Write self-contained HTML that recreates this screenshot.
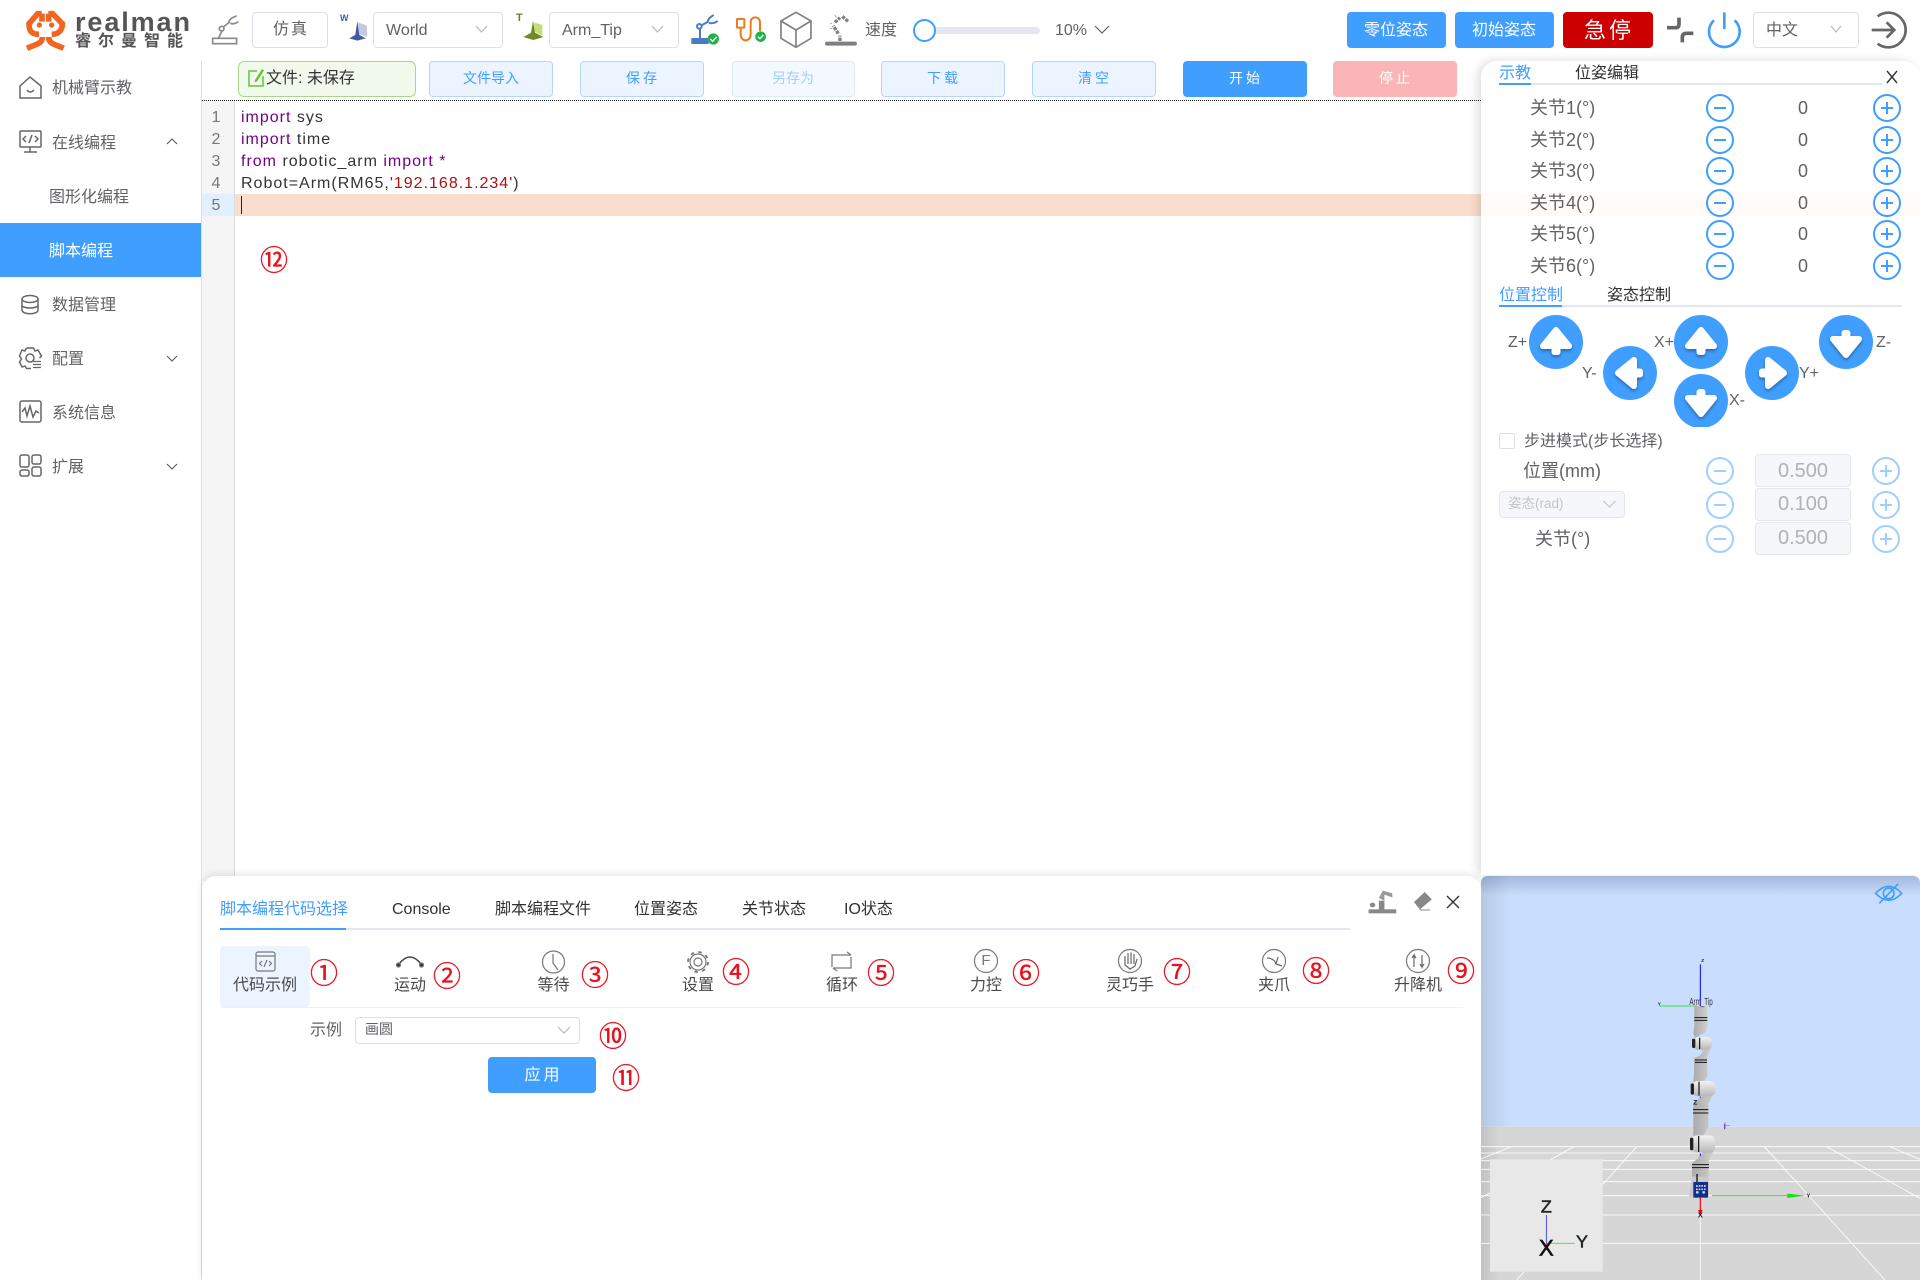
<!DOCTYPE html>
<html lang="zh"><head><meta charset="utf-8"><title>realman</title>
<style>
html,body{margin:0;padding:0;background:#fff}
body{position:relative;width:1920px;height:1280px;overflow:hidden;font-family:"Liberation Sans","Noto Sans CJK SC",sans-serif;color:#606266;font-size:16px}
.b{position:absolute;box-sizing:border-box}
.t{position:absolute;line-height:0;white-space:nowrap}
.c{transform:translateX(-50%)}
.sel{border:1px solid #dcdfe6;border-radius:4px;background:#fff}
.tb{background:#ecf5ff;border:1px solid #b3d8ff;border-radius:4px;top:61px;height:36px}
.tbt{top:78px;font-size:14px;color:#409eff}
.p{background:#409eff;border-radius:4px}
.n{position:absolute;line-height:0;white-space:nowrap;transform:translateX(-50%);color:#e8101c;font-size:28px;-webkit-text-stroke:.35px #e8101c;font-family:"Liberation Sans","Noto Sans CJK JP",sans-serif}
.s{font-size:16px;color:#606266}
.j{font-size:18px;color:#606266;left:1530px}
.v{font-size:18px;color:#606266;left:1803px}
.a{font-size:16px;color:#606266}
.code{font-size:16px;letter-spacing:1px;color:#333;left:241px}
.kw{color:#708}
.ln{font-size:16px;color:#777;left:216px;transform:translateX(-50%)}
.tab{font-size:16px;color:#303133;top:909.500px}
.it{font-size:16px;color:#4a4a4a;top:986px;transform:translateX(-50%)}
.inp{background:#f5f7fa;border:1px solid #e4e7ed;border-radius:4px;left:1755px;width:96px}
.iv{font-size:20px;color:#b0b2b8;left:1803px;transform:translateX(-50%)}
svg{position:absolute;left:0;top:0}
</style></head><body>

<!-- backgrounds -->
<div class="b" style="left:201px;top:61px;width:1px;height:1219px;background:#dcdfe6"></div>
<div class="b" style="left:202px;top:100px;width:1279px;height:1px;border-top:1px dotted #222"></div>
<div class="b" style="left:202px;top:101px;width:33px;height:780px;background:#f5f5f5;border-right:1px solid #dedede"></div>
<div class="b" style="left:202px;top:194px;width:32px;height:22px;background:#e2f0fd"></div>
<div class="b" style="left:235px;top:194px;width:1246px;height:22px;background:#fadecd"></div>
<div class="b" style="left:0;top:223px;width:201px;height:54px;background:#409eff"></div>

<!-- top bar controls -->
<div class="b sel" style="left:252px;top:12px;width:76px;height:36px"></div>
<div class="b sel" style="left:373px;top:12px;width:130px;height:36px"></div>
<div class="b sel" style="left:549px;top:12px;width:130px;height:36px"></div>
<div class="b p" style="left:1347px;top:12px;width:99px;height:36px"></div>
<div class="b p" style="left:1455px;top:12px;width:99px;height:36px"></div>
<div class="b" style="left:1563px;top:12px;width:90px;height:36px;background:#cc0000;border-radius:4px"></div>
<div class="b sel" style="left:1753px;top:12px;width:106px;height:36px"></div>
<div class="b" style="left:925px;top:27px;width:115px;height:7px;background:#e4e7ed;border-radius:4px"></div>
<div class="b" style="left:913px;top:19px;width:23px;height:23px;background:#fff;border:2px solid #409eff;border-radius:50%"></div>

<!-- toolbar -->
<div class="b" style="left:238px;top:61px;width:178px;height:36px;background:#f0f9eb;border:1px solid #a4da89;border-radius:6px"></div>
<div class="b tb" style="left:429px;width:124px"></div>
<div class="b tb" style="left:580px;width:124px"></div>
<div class="b tb" style="left:732px;width:123px;background:#f3f9ff;border-color:#d9ecff"></div>
<div class="b tb" style="left:881px;width:124px"></div>
<div class="b tb" style="left:1032px;width:124px"></div>
<div class="b" style="left:1183px;top:61px;width:124px;height:36px;background:#409eff;border-radius:4px"></div>
<div class="b" style="left:1333px;top:61px;width:124px;height:36px;background:#fab6b6;border-radius:4px"></div>

<!-- right panel -->
<div class="b" style="left:1481px;top:61px;width:439px;height:814px;background:#fff;border-radius:16px 16px 0 0;box-shadow:-3px 0 10px rgba(0,0,0,.14)"></div>
<div class="b" style="left:1499px;top:83px;width:383px;height:2px;background:#e4e7ed"></div>
<div class="b" style="left:1499px;top:83px;width:32px;height:2px;background:#409eff"></div>
<div class="b" style="left:1481px;top:194px;width:439px;height:22px;background:#fffbf8"></div>
<div class="b" style="left:1499px;top:305px;width:403px;height:2px;background:#e4e7ed"></div>
<div class="b" style="left:1499px;top:305px;width:63px;height:2px;background:#409eff"></div>
<div class="b" style="left:1499px;top:433px;width:16px;height:16px;background:#fff;border:1px solid #dcdfe6;border-radius:2px"></div>
<div class="b" style="left:1499px;top:491px;width:126px;height:27px;background:#f5f7fa;border:1px solid #e4e7ed;border-radius:4px"></div>
<div class="b inp" style="top:454px;height:33px"></div>
<div class="b inp" style="top:488px;height:33px"></div>
<div class="b inp" style="top:522px;height:33px"></div>

<!-- bottom panel -->
<div class="b" style="left:202px;top:876px;width:1279px;height:404px;background:#fff;border-radius:14px 14px 0 0;box-shadow:0 -2px 8px rgba(0,0,0,.1)"></div>
<div class="b" style="left:220px;top:928px;width:1130px;height:2px;background:#e4e7ed"></div>
<div class="b" style="left:220px;top:928px;width:126px;height:2px;background:#409eff"></div>
<div class="b" style="left:220px;top:946px;width:90px;height:61px;background:#ecf5ff;border-radius:4px"></div>
<div class="b" style="left:220px;top:1007px;width:1243px;height:1px;background:#f0f0f0"></div>
<div class="b sel" style="left:355px;top:1017px;width:225px;height:27px"></div>
<div class="b p" style="left:488px;top:1057px;width:108px;height:36px"></div>

<!-- global icon layer -->
<svg width="1920" height="1280" viewBox="0 0 1920 1280" fill="none">
<defs>
<filter id="sh" x="-30%" y="-30%" width="160%" height="170%"><feDropShadow dx="0" dy="2" stdDeviation="1.500" flood-color="#000" flood-opacity=".35"/></filter>
<clipPath id="cp"><rect x="1481" y="61" width="439" height="366"/></clipPath>
<clipPath id="vw"><path d="M3 40Q3 18 25 18H1296Q1320 18 1320 40V1230H3Z"/></clipPath>
<linearGradient id="skt" x1="0" y1="0" x2="0" y2="1"><stop offset="0" stop-color="#a3b9dc"/><stop offset="1" stop-color="#c9defc"/></linearGradient>
<linearGradient id="skl" x1="0" y1="0" x2="1" y2="0"><stop offset="0" stop-color="#000" stop-opacity=".1"/><stop offset="1" stop-color="#000" stop-opacity="0"/></linearGradient>
<linearGradient id="lk" x1="0" y1="0" x2="1" y2="0"><stop offset="0" stop-color="#aaa"/><stop offset="1" stop-color="#d0d0d0"/></linearGradient>
<linearGradient id="jt" x1="0" y1="0" x2="0" y2="1"><stop offset="0" stop-color="#f2f2f2"/><stop offset="1" stop-color="#b8b8b8"/></linearGradient>
</defs>

<!-- logo + left top icons -->
<g transform="translate(15 5) scale(.3333)">
 <g stroke="#f0651f" stroke-width="17">
  <path d="M72 88C45 88 42 72 42 56L68 26H80"/><path d="M110 88C135 88 142 72 142 56L113 26H100"/>
  <path d="M81 26V50M101 26V50"/>
  <path d="M82 96C82 118 60 118 36 130"/><path d="M101 96C101 118 122 118 146 130"/>
 </g>
 <circle cx="73" cy="60" r="8" fill="#f0651f"/><circle cx="110" cy="60" r="8" fill="#f0651f"/>
 <g stroke="#8a8a8a" stroke-width="5">
  <rect x="593" y="100" width="72" height="16"/><path d="M622 76L610 100M625 66L645 50"/>
  <circle cx="620" cy="71" r="7"/><path d="M641 52C645 38 655 38 665 32M646 55C655 58 662 56 670 50"/>
 </g>
 <path d="M1030 52L1056 62V96L1030 86Z" fill="#c4c8e2"/>
 <path d="M1003 100L1027 86L1052 100L1027 107Z" fill="#46599e"/>
 <path d="M1027 48L1033 90H1021Z" fill="#46599e"/>
</g>
<g transform="translate(505 5) scale(.3333)">
 <path d="M88 52L112 60V92L88 80Z" fill="#c6dc7a"/>
 <path d="M55 96L84 80L115 96L85 105Z" fill="#6d8a24"/>
 <path d="M84 46L90 84H78Z" fill="#6d8a24"/>
 <g stroke="#4a7cc0" stroke-width="6">
  <rect x="562" y="102" width="46" height="12" fill="#4a7cc0"/><path d="M585 100V72M588 62L610 50"/>
  <circle cx="583" cy="64" r="7"/><path d="M608 52C610 38 618 36 626 30M612 54C622 56 630 54 638 48"/>
 </g>
 <circle cx="625" cy="102" r="17" fill="#22b14c"/><path d="M616 102L623 109L635 96" stroke="#fff" stroke-width="4"/>
 <g stroke="#f07a16" stroke-width="6">
  <rect x="696" y="42" width="22" height="26" rx="2"/><path d="M707 68V88C707 112 737 112 737 88V52C737 32 765 32 765 52V78"/>
 </g>
 <circle cx="767" cy="95" r="16" fill="#22b14c"/><path d="M759 95L765 101L775 90" stroke="#fff" stroke-width="4"/>
 <g stroke="#808080" stroke-width="5">
  <path d="M873 22L918 48V100L873 127L828 100V48ZM828 48L873 75L918 48M873 75V127"/>
 </g>
 <rect x="960" y="110" width="96" height="12" rx="6" fill="#808080"/>
 <path d="M1005 108V92M1000 86L985 62M990 52L1005 38M1012 34L1030 50" stroke="#808080" stroke-width="10" stroke-dasharray="10 3"/>
 <path d="M975 56H982M975 70H982M990 30L995 38" stroke="#aaa" stroke-width="3"/>
</g>
<g transform="translate(1655 5) scale(.3333)">
 <path d="M36 68H62Q72 68 72 58V38M115 85H95Q82 85 82 97V112" stroke="#666" stroke-width="11"/>
 <path d="M177 46A46 46 0 1 0 239 46M208 22V72" stroke="#409eff" stroke-width="8"/>
 <path d="M668 34A52 52 0 1 1 668 116M650 75H716M695 52L718 75L695 98" stroke="#666" stroke-width="8"/>
</g>

<!-- chevrons -->
<g stroke="#b5b9c2" stroke-width="1.200">
 <path d="M476 26L481.500 32L487 26M652 26L657.500 32L663 26M1831 26L1836 32L1841 26"/>
 <path d="M1095 26L1102 33L1109 26" stroke="#606266"/>
 <path d="M558 1027L564 1033L570 1027"/>
 <path d="M1603.500 501L1609.500 507L1615.500 501" stroke="#c0c4cc"/>
</g>
<g stroke="#555" stroke-width="1">
 <path d="M167 144L172 139L177 144M167 356L172 361L177 356M167 464L172 469L177 464"/>
</g>

<!-- chip icon -->
<path d="M257 71H249V86H263V76" stroke="#67c23a" stroke-width="1.500"/><path d="M255 80L262 69L264 70.500L257 81.500L254.500 82.500Z" fill="#67c23a"/>

<!-- sidebar icons -->
<g stroke="#666" stroke-width="1.500">
 <path d="M20 86L30 77L41 86V98H20ZM27 90Q30 94 34 90"/>
 <rect x="20" y="131" width="21" height="16" rx="1"/><path d="M30 147V152M24 152H37M26 136L23 139L26 142M35 136L38 139L35 142M32 135L29 143"/>
 <ellipse cx="30" cy="299" rx="8" ry="3.500"/><path d="M22 299V310C22 315 38 315 38 310V299M22 305C22 309 38 309 38 305"/>
 <path d="M26.500 348H33.500L35 351L38 350L41.500 356L39.500 358M26.500 348L25 351L22 350L19.500 356L21.500 359L19.500 362L22 367L25 366L26.500 368.500H31"/>
 <circle cx="30" cy="358" r="4"/>
 <path d="M33 361.500H41M33 364.500H41M33 367.500H41" stroke-width="1.200"/>
 <rect x="20" y="401" width="21" height="21" rx="2"/><path d="M22 412L25 408L27 416L30 406L33 417L36 411L39 413"/>
 <rect x="20" y="455" width="9" height="12" rx="2"/><rect x="32" y="455" width="9" height="9" rx="2"/><rect x="20" y="470" width="9" height="6" rx="2"/><rect x="32" y="467" width="9" height="9" rx="2"/>
</g>

<!-- joints -->
<g stroke="#409eff" stroke-width="2">
 <circle cx="1720" cy="108" r="13"/><path d="M1714 108H1726"/><circle cx="1887" cy="108" r="13"/><path d="M1881 108H1893M1887 102V114"/>
 <circle cx="1720" cy="140" r="13"/><path d="M1714 140H1726"/><circle cx="1887" cy="140" r="13"/><path d="M1881 140H1893M1887 134V146"/>
 <circle cx="1720" cy="171" r="13"/><path d="M1714 171H1726"/><circle cx="1887" cy="171" r="13"/><path d="M1881 171H1893M1887 165V177"/>
 <circle cx="1720" cy="203" r="13"/><path d="M1714 203H1726"/><circle cx="1887" cy="203" r="13"/><path d="M1881 203H1893M1887 197V209"/>
 <circle cx="1720" cy="234" r="13"/><path d="M1714 234H1726"/><circle cx="1887" cy="234" r="13"/><path d="M1881 234H1893M1887 228V240"/>
 <circle cx="1720" cy="266" r="13"/><path d="M1714 266H1726"/><circle cx="1887" cy="266" r="13"/><path d="M1881 266H1893M1887 260V272"/>
</g>
<g stroke="#a0cfff" stroke-width="2">
 <circle cx="1720" cy="471" r="13"/><path d="M1714 471H1726"/><circle cx="1886" cy="471" r="13"/><path d="M1880 471H1892M1886 465V477"/>
 <circle cx="1720" cy="505" r="13"/><path d="M1714 505H1726"/><circle cx="1886" cy="505" r="13"/><path d="M1880 505H1892M1886 499V511"/>
 <circle cx="1720" cy="539" r="13"/><path d="M1714 539H1726"/><circle cx="1886" cy="539" r="13"/><path d="M1880 539H1892M1886 533V545"/>
</g>
<path d="M1887 71L1897 83M1897 71L1887 83" stroke="#333" stroke-width="1.400"/>

<!-- arrow pads -->
<g clip-path="url(#cp)">
 <circle cx="1556" cy="342" r="27" fill="#409eff"/><circle cx="1630" cy="373" r="27" fill="#409eff"/>
 <circle cx="1701" cy="342" r="27" fill="#409eff"/><circle cx="1701" cy="401" r="27" fill="#409eff"/>
 <circle cx="1772" cy="373" r="27" fill="#409eff"/><circle cx="1846" cy="342" r="27" fill="#409eff"/>
 <g fill="#fff" stroke="#fff" stroke-width="6" stroke-linejoin="round" filter="url(#sh)">
  <path d="M1556 330L1569 346H1557.500V352H1554.500V346H1543Z"/>
  <path d="M1701 330L1714 346H1702.500V352H1699.500V346H1688Z"/>
  <path d="M1846 355L1833 339H1844.500V333H1847.500V339H1859Z"/>
  <path d="M1701 414L1688 398H1699.500V392H1702.500V398H1714Z"/>
  <path d="M1618 373L1634 360V371.500H1640V374.500H1634V386Z"/>
  <path d="M1784 373L1768 360V371.500H1762V374.500H1768V386Z"/>
 </g>
</g>

<!-- bottom toolbar icons -->
<g stroke="#777" stroke-width="1.200">
 <rect x="256" y="952" width="19" height="19" rx="2"/><path d="M256 956H275M262 961L259.500 963.500L262 966M269 961L271.500 963.500L269 966M267 960L264 967"/>
 <path d="M399 964Q410 950 421 964" stroke="#444" stroke-width="1.500"/><circle cx="398.500" cy="965" r="2" fill="#333"/><circle cx="421.500" cy="965" r="2" fill="#333"/>
 <circle cx="553.500" cy="962" r="11"/><path d="M553 954V963L558 970"/>
 <circle cx="698" cy="962" r="8"/><circle cx="698" cy="962" r="4"/><circle cx="698" cy="962" r="10" stroke-width="1.800" stroke-dasharray="3.500 4.350"/>
 <path d="M832 967V955H851M851 955L847 952M851 957V968H833M833 968L837 971" stroke="#777"/>
 <circle cx="986" cy="961" r="11.500"/><circle cx="1130" cy="961" r="11.500"/>
 <path d="M1125 965V956M1128 964V953M1131 964V952.500M1134 964V954M1125 965L1130 969L1135 966L1137 959" stroke="#666"/>
 <circle cx="1274" cy="961" r="11.500"/><path d="M1267 958Q1274 958 1276 964L1282 966M1276 964L1278 957" stroke="#666"/>
 <circle cx="1418" cy="961" r="11.500"/><path d="M1414 967V955L1412 958M1414 955L1416 958M1422 955V967L1420 964M1422 967L1424 964" stroke="#666"/>
 <path d="M1447 896L1459 908M1459 896L1447 908" stroke="#333" stroke-width="1.400"/>
</g>
<g transform="translate(880 870) scale(.3953 .3333)" fill="#888">
 <rect x="1236" y="118" width="70" height="12"/>
 <rect x="1262" y="92" width="14" height="28"/><circle cx="1246" cy="105" r="7"/>
 <path d="M1262 84L1272 62L1296 70L1296 82L1276 74L1276 92Z" fill="#999"/>
 <path d="M1352 95L1378 66L1396 88L1368 116Z"/>
 <path d="M1352 95L1368 120H1392" fill="none" stroke="#888" stroke-width="3"/>
</g>

<!-- 3D view -->
<g transform="translate(1480 870) scale(.33333)" clip-path="url(#vw)">
 <rect x="0" y="18" width="1320" height="752" fill="#c9defc"/>
 <rect x="0" y="18" width="1320" height="60" fill="url(#skt)"/>
 <rect x="0" y="18" width="90" height="752" fill="url(#skl)"/>
 <rect x="0" y="770" width="1320" height="460" fill="#d6d6d6"/>
 <rect x="0" y="770" width="60" height="460" fill="url(#skl)"/>
 <g stroke="#fff" stroke-width="2.500">
  <path d="M0 830H1320M0 849H1320M0 872H1320M0 898H1320M0 935H1320M0 977H1320M0 1035H1320M0 1120H1320"/>
  <path d="M661 1035V1230M853 830L1215 1230M470 830L110 1230M1040 830L1320 985M282 830L0 985M1230 830L1320 868M95 830L0 868"/>
 </g>
 <rect x="30" y="868" width="338" height="337" fill="#e8e8e8"/>
 <path d="M199 1035V1120" stroke="#2a2aff" stroke-width="2.500"/>
 <path d="M199 1120H285" stroke="#3fe03f" stroke-width="2.500"/>
 <path d="M199 1120V1140" stroke="#f00" stroke-width="3"/>
 <!-- frame axes -->
 <path d="M661 283V408M661 680V700M661 785V800M661 850V865" stroke="#00f" stroke-width="3"/>
 <path d="M538 408H650" stroke="#3fe03f" stroke-width="3"/>
 <path d="M696 977H930" stroke="#3fe03f" stroke-width="3"/><path d="M922 971L975 977L922 984Z" fill="#18e018"/>
 <path d="M661 983V1025" stroke="#f00" stroke-width="3.500"/><path d="M654 1020H668L661 1034Z" fill="#e00"/>
 <path d="M735 757V777" stroke="#d33" stroke-width="2"/><path d="M735 767H750" stroke="#3c3" stroke-width="2"/><path d="M733 762V778" stroke="#33d" stroke-width="2"/>
 <!-- robot -->
 <path d="M643 408H682V470Q682 490 662 494L646 506L640 490L643 470Z" fill="url(#lk)"/>
 <path d="M690 505Q695 525 690 540L682 560V620L668 640H640L642 610V565L662 555L670 540H650V505Z" fill="url(#lk)"/>
 <rect x="640" y="501" width="56" height="38" rx="14" fill="url(#jt)"/>
 <rect x="636" y="506" width="10" height="28" rx="5" fill="#222"/><path d="M659 503V537" stroke="#111" stroke-width="3.500"/>
 <path d="M704 650Q704 670 685 700V770L668 800H640V700L665 680L680 672H650V640Z" fill="url(#lk)"/>
 <rect x="636" y="633" width="70" height="46" rx="16" fill="url(#jt)"/>
 <rect x="632" y="640" width="10" height="34" rx="5" fill="#222"/><path d="M657 635V677" stroke="#111" stroke-width="3.500"/>
 <path d="M704 820Q704 845 686 870V980H636V880L660 860L670 845H650V800Z" fill="url(#lk)"/>
 <rect x="635" y="796" width="70" height="52" rx="16" fill="url(#jt)"/>
 <rect x="630" y="803" width="10" height="38" rx="5" fill="#222"/><path d="M656 798V846" stroke="#111" stroke-width="3.500"/>
 <path d="M643 443H682M643 451H682M645 570H681M645 577H681M639 719H685M639 729H685M636 884H687M636 893H687" stroke="#111" stroke-width="3"/>
 <path d="M636 920H686V980H628Z" fill="#c9c9c9"/>
 <path d="M651 912V945" stroke="#111" stroke-width="4"/>
 <rect x="640" y="936" width="44" height="47" fill="#10318a"/>
 <path d="M648 948H678M648 958H678" stroke="#cdd7ef" stroke-width="5" stroke-dasharray="5 3"/><circle cx="652" cy="967" r="4" fill="#cdd7ef"/><circle cx="671" cy="967" r="4" fill="#cdd7ef"/>
 <!-- eye -->
 <path d="M1187 70Q1226 28 1265 70Q1226 112 1187 70Z" stroke="#409eff" stroke-width="5"/><circle cx="1226" cy="70" r="16" stroke="#409eff" stroke-width="5"/><path d="M1198 100L1254 42" stroke="#409eff" stroke-width="5"/>
 <text x="628" y="405" font-size="30" fill="#333" textLength="70" lengthAdjust="spacingAndGlyphs">Arm_Tip</text>
 <text x="668" y="276" font-size="15" fill="#333" text-anchor="middle" font-weight="bold">Z</text>
 <text x="538" y="407" font-size="15" fill="#222" text-anchor="middle" font-weight="bold">Y</text>
 <text x="985" y="982" font-size="17" fill="#222" text-anchor="middle" font-weight="bold">Y</text>
 <text x="661" y="1042" font-size="22" fill="#111" text-anchor="middle" font-weight="bold">X</text>
 <text x="646" y="704" font-size="20" fill="#111" text-anchor="middle" font-weight="bold">Z</text>
 <text x="199" y="1028" font-size="54" fill="#222" text-anchor="middle" stroke="#222" stroke-width="1.500">Z</text>
 <text x="199" y="1156" font-size="66" fill="#111" text-anchor="middle" stroke="#111" stroke-width="2">X</text>
 <text x="306" y="1133" font-size="54" fill="#222" text-anchor="middle" stroke="#222" stroke-width="1.500">Y</text>
</g>
</svg>

<!-- logo text -->
<div class="t" style="left:75px;top:22px;font-size:27px;font-weight:700;color:#555;letter-spacing:1.900px">realman</div>
<div class="t" style="left:75px;top:42px;font-size:16px;font-weight:700;color:#555;letter-spacing:7px">睿尔曼智能</div>

<!-- top texts -->
<div class="t c" style="left:291px;top:30px;font-size:16px;letter-spacing:2px">仿真</div>
<div class="t" style="left:386px;top:31px;font-size:16px">World</div>
<div class="t" style="left:562px;top:31px;font-size:16px">Arm_Tip</div>
<div class="t" style="left:865px;top:31px;font-size:16px">速度</div>
<div class="t" style="left:1055px;top:30.500px;font-size:16px">10%</div>
<div class="t c" style="left:1396px;top:31px;font-size:16px;color:#fff">零位姿态</div>
<div class="t c" style="left:1504px;top:31px;font-size:16px;color:#fff">初始姿态</div>
<div class="t c" style="left:1609px;top:30.500px;font-size:22px;color:#fff;letter-spacing:3px">急停</div>
<div class="t" style="left:1766px;top:31px;font-size:16px">中文</div>
<div class="t" style="left:340px;top:18px;font-size:9px;font-weight:700;color:#3d5aa8">W</div>
<div class="t" style="left:516px;top:18px;font-size:11px;font-weight:700;color:#6d7a3a">T</div>

<!-- sidebar -->
<div class="t s" style="left:52px;top:89px">机械臂示教</div>
<div class="t s" style="left:52px;top:143.500px">在线编程</div>
<div class="t s" style="left:49px;top:197.500px">图形化编程</div>
<div class="t s" style="left:49px;top:251.500px;color:#fff">脚本编程</div>
<div class="t s" style="left:52px;top:305.500px">数据管理</div>
<div class="t s" style="left:52px;top:359.500px">配置</div>
<div class="t s" style="left:52px;top:413.500px">系统信息</div>
<div class="t s" style="left:52px;top:467.500px">扩展</div>

<!-- toolbar text -->
<div class="t" style="left:266px;top:79px;font-size:16px;color:#303133">文件:&nbsp;未保存</div>
<div class="t c tbt" style="left:491px">文件导入</div>
<div class="t c tbt" style="left:643px;letter-spacing:3px">保存</div>
<div class="t c tbt" style="left:793px;color:#a0cfff">另存为</div>
<div class="t c tbt" style="left:944px;letter-spacing:3px">下载</div>
<div class="t c tbt" style="left:1095px;letter-spacing:3px">清空</div>
<div class="t c tbt" style="left:1246px;color:#fff;letter-spacing:3px">开始</div>
<div class="t c tbt" style="left:1396px;color:#fff;letter-spacing:3px">停止</div>

<!-- code -->
<div class="t ln" style="top:117.500px">1</div><div class="t ln" style="top:139.500px">2</div><div class="t ln" style="top:161.500px">3</div><div class="t ln" style="top:183.500px">4</div><div class="t ln" style="top:205.500px">5</div>
<div class="t code" style="top:118px"><span class="kw">import</span> sys</div>
<div class="t code" style="top:140px"><span class="kw">import</span> time</div>
<div class="t code" style="top:162px"><span class="kw">from</span> robotic_arm <span class="kw">import</span> <span class="kw">*</span></div>
<div class="t code" style="top:184px">Robot=Arm(RM65,<span style="color:#a11">'192.168.1.234'</span>)</div>
<div class="b" style="left:241px;top:196px;width:1px;height:18px;background:#222"></div>
<div class="n" style="left:274px;top:261px">⑫</div>

<!-- right panel text -->
<div class="t" style="left:1499px;top:74px;font-size:16px;color:#409eff">示教</div>
<div class="t" style="left:1575px;top:74px;font-size:16px;color:#303133">位姿编辑</div>
<div class="t j" style="top:108px">关节1(°)</div><div class="t j" style="top:140px">关节2(°)</div><div class="t j" style="top:171px">关节3(°)</div><div class="t j" style="top:203px">关节4(°)</div><div class="t j" style="top:234px">关节5(°)</div><div class="t j" style="top:266px">关节6(°)</div>
<div class="t v c" style="top:108px">0</div><div class="t v c" style="top:140px">0</div><div class="t v c" style="top:171px">0</div><div class="t v c" style="top:203px">0</div><div class="t v c" style="top:234px">0</div><div class="t v c" style="top:266px">0</div>
<div class="t" style="left:1499px;top:296px;font-size:16px;color:#409eff">位置控制</div>
<div class="t" style="left:1607px;top:296px;font-size:16px;color:#303133">姿态控制</div>
<div class="t a" style="left:1508px;top:343px">Z+</div>
<div class="t a" style="left:1582px;top:374px">Y-</div>
<div class="t a" style="left:1654px;top:343px">X+</div>
<div class="t a" style="left:1729px;top:401px">X-</div>
<div class="t a" style="left:1799px;top:374px">Y+</div>
<div class="t a" style="left:1876px;top:343px">Z-</div>
<div class="t" style="left:1524px;top:442px;font-size:16px">步进模式(步长选择)</div>
<div class="t" style="left:1523px;top:471px;font-size:18px">位置(mm)</div>
<div class="t" style="left:1508px;top:504px;font-size:13.500px;color:#c0c4cc">姿态(rad)</div>
<div class="t" style="left:1535px;top:539px;font-size:18px">关节(°)</div>
<div class="t iv" style="top:471px">0.500</div>
<div class="t iv" style="top:504px">0.100</div>
<div class="t iv" style="top:538px">0.500</div>

<!-- bottom text -->
<div class="t tab" style="left:220px;color:#409eff">脚本编程代码选择</div>
<div class="t tab" style="left:392px">Console</div>
<div class="t tab" style="left:495px">脚本编程文件</div>
<div class="t tab" style="left:634px">位置姿态</div>
<div class="t tab" style="left:742px">关节状态</div>
<div class="t tab" style="left:844px">IO状态</div>
<div class="t it" style="left:265px">代码示例</div>
<div class="t it" style="left:410px">运动</div>
<div class="t it" style="left:553.500px">等待</div>
<div class="t it" style="left:698px">设置</div>
<div class="t it" style="left:842px">循环</div>
<div class="t it" style="left:986px">力控</div>
<div class="t it" style="left:1130px">灵巧手</div>
<div class="t it" style="left:1274px">夹爪</div>
<div class="t it" style="left:1418px">升降机</div>
<div class="t" style="left:986px;top:961px;font-size:15px;color:#777;transform:translateX(-50%)">F</div>
<div class="n" style="left:324px;top:974px">①</div>
<div class="n" style="left:447px;top:977px">②</div>
<div class="n" style="left:595px;top:976px">③</div>
<div class="n" style="left:736px;top:973px">④</div>
<div class="n" style="left:881px;top:974px">⑤</div>
<div class="n" style="left:1026px;top:974px">⑥</div>
<div class="n" style="left:1177px;top:973px">⑦</div>
<div class="n" style="left:1316px;top:972px">⑧</div>
<div class="n" style="left:1461px;top:972px">⑨</div>
<div class="n" style="left:613px;top:1037px">⑩</div>
<div class="n" style="left:626px;top:1079px">⑪</div>
<div class="t" style="left:310px;top:1031px;font-size:16px">示例</div>
<div class="t" style="left:365px;top:1029px;font-size:14px">画圆</div>
<div class="t c" style="left:543.500px;top:1076px;font-size:16px;color:#fff;letter-spacing:3px">应用</div>
</body></html>
